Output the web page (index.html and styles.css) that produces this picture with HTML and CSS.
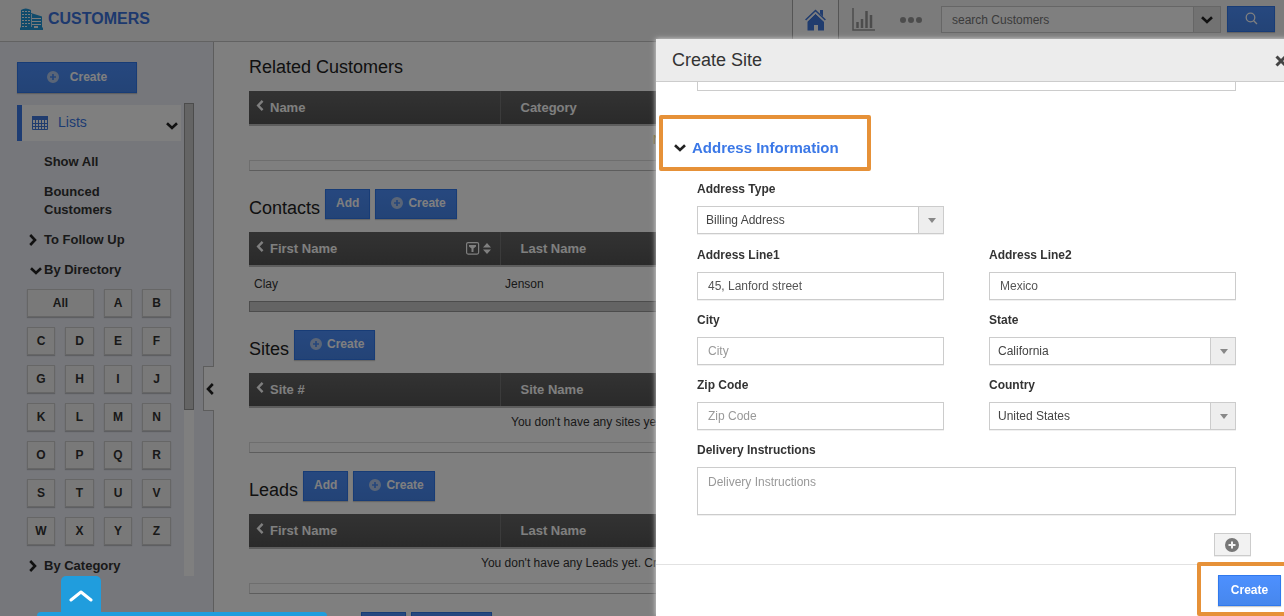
FILE: index.html
```html
<!DOCTYPE html>
<html lang="en">
<head>
<meta charset="utf-8">
<title>Customers - Create Site</title>
<link rel="stylesheet" href="styles.css">
</head>
<body>
<svg class="sprite" aria-hidden="true">
  <symbol id="plus" viewBox="0 0 14 14"><path fill="currentColor" fill-rule="evenodd" d="M7 0a7 7 0 1 1 0 14A7 7 0 0 1 7 0zM6 3.500v2.500H3.500v2H6v2.500h2V8h2.500V6H8V3.500z"/></symbol>
  <symbol id="down" viewBox="0 0 12 8"><path fill="none" stroke="currentColor" stroke-width="2.600" d="M1 1.200l5 4.800 5-4.800"/></symbol>
  <symbol id="right" viewBox="0 0 8 12"><path fill="none" stroke="currentColor" stroke-width="2.600" d="M1.200 1L6 6l-4.800 5"/></symbol>
  <symbol id="left" viewBox="0 0 8 12"><path fill="none" stroke="currentColor" stroke-width="2.600" d="M6.800 1L2 6l4.800 5"/></symbol>
</svg>

<div class="app">
  <header class="topbar">
    <svg class="logo" viewBox="0 0 23 22" aria-hidden="true">
      <path fill="#2096d8" d="M1 2Q5.500-1 11 2v3l11 3.500v11h1V22H0v-2.500h1z"/>
      <path stroke="#f6f6f6" stroke-width="1" d="M2 3.500h2m1 0h2m1 0h2M2 6.500h2m1 0h2m1 0h2M2 9.500h2m1 0h2m1 0h2M2 12.500h2m1 0h2m1 0h2M2 15.500h2m1 0h2m1 0h2M2 18.500h2m1 0h2M12 10.500h9M12 13.500h9M12 16.500h9"/>
      <path stroke="#f6f6f6" stroke-width=".800" d="M11.500 6v13"/>
      <path fill="#f6f6f6" d="M14 18h4v2h-4z"/>
    </svg>
    <h1 class="brand">CUSTOMERS</h1>
    <nav class="tools">
      <a class="tool tool-home" href="#" aria-label="Home">
        <svg width="21" height="22" viewBox="0 0 21 22"><path fill="#4178dd" d="M10.500 4.800L19 12.500V21.500h-6V16H9v5.500H2.500v-9zM15 1h3v6.500l-3-3z"/><path fill="none" stroke="#fff" stroke-width="1" d="M1.500 12.800l9-8.500 9 8.500"/><path fill="none" stroke="#4178dd" stroke-width="1.600" d="M.6 11L10.500 1.500l9.900 9.500"/></svg>
      </a>
      <a class="tool" href="#" aria-label="Reports">
        <svg width="23" height="23" viewBox="0 0 23 23"><path fill="none" stroke="#999" stroke-width="1.500" d="M1 0v22h22"/><path stroke="#999" stroke-width="2.500" d="M5.500 20v-6M10 20V11M14.500 20V3M19 20V7"/></svg>
      </a>
      <a class="tool" href="#" aria-label="More">
        <svg width="22" height="6" viewBox="0 0 22 6"><g fill="#999"><circle cx="3" cy="3" r="3"/><circle cx="11" cy="3" r="3"/><circle cx="19" cy="3" r="3"/></g></svg>
      </a>
    </nav>
    <form class="search">
      <input class="search-input" type="text" placeholder="search Customers" aria-label="Search">
      <button class="search-scope" type="button" aria-label="Choose scope"><svg width="12" height="8"><use href="#down"/></svg></button>
      <button class="btn search-go" type="button" aria-label="Search"><svg width="13" height="13" viewBox="0 0 13 13"><g fill="none" stroke="#fff" stroke-width="1.300"><circle cx="5.500" cy="5.500" r="4.300"/><path d="M8.700 8.700L12 12"/></g></svg></button>
    </form>
  </header>

  <div class="columns">
    <aside class="sidebar">
      <button class="btn btn-main" type="button"><svg class="plus" width="12" height="12"><use href="#plus"/></svg>Create</button>
      <div class="side-scroll">
        <div class="side-body">
          <button class="lists" type="button">
            <svg width="16" height="14" viewBox="0 0 16 14"><path fill="#4178dd" d="M0 0h16v4H0z"/><path fill="none" stroke="#4178dd" stroke-width="1" d="M.5 4v9.500h15V4M3.500 4v9M6.500 4v9M9.500 4v9M12.500 4v9M0 7.500h16M0 10.500h16"/></svg>
            <span class="lists-name">Lists</span>
            <svg class="lists-arrow" width="12" height="8"><use href="#down"/></svg>
          </button>
          <nav class="side-nav">
            <a href="#">Show All</a>
            <a href="#">Bounced<br>Customers</a>
            <a href="#"><svg class="mark" width="8" height="12"><use href="#right"/></svg>To Follow Up</a>
            <a href="#"><svg class="mark mark-open" width="12" height="8"><use href="#down"/></svg>By Directory</a>
          </nav>
          <div class="letters">
            <button class="wide" type="button">All</button><button type="button">A</button><button type="button">B</button>
            <button type="button">C</button><button type="button">D</button><button type="button">E</button><button type="button">F</button>
            <button type="button">G</button><button type="button">H</button><button type="button">I</button><button type="button">J</button>
            <button type="button">K</button><button type="button">L</button><button type="button">M</button><button type="button">N</button>
            <button type="button">O</button><button type="button">P</button><button type="button">Q</button><button type="button">R</button>
            <button type="button">S</button><button type="button">T</button><button type="button">U</button><button type="button">V</button>
            <button type="button">W</button><button type="button">X</button><button type="button">Y</button><button type="button">Z</button>
          </div>
          <nav class="side-nav side-nav-end">
            <a href="#"><svg class="mark" width="8" height="12"><use href="#right"/></svg>By Category</a>
          </nav>
        </div>
        <div class="track"><div class="thumb"></div></div>
      </div>
      <button class="collapse" type="button" aria-label="Collapse"><svg width="8" height="12"><use href="#left"/></svg></button>
    </aside>

    <main class="content">
      <section class="block">
        <div class="block-head"><h2>Related Customers</h2></div>
        <table>
          <thead><tr><th class="first"><svg width="8" height="11"><use href="#left"/></svg>Name</th><th>Category</th></tr></thead>
          <tbody><tr><td class="note note-related" colspan="2">No related customers</td></tr></tbody>
        </table>
        <div class="hbar"></div>
      </section>
      <section class="block">
        <div class="block-head"><h2>Contacts</h2><button class="btn" type="button">Add</button><button class="btn btn-create" type="button"><svg class="plus" width="12" height="12"><use href="#plus"/></svg>Create</button></div>
        <table>
          <thead><tr><th class="first"><svg width="8" height="11"><use href="#left"/></svg>First Name<span class="sort"><svg width="25" height="13" viewBox="0 0 25 13" aria-hidden="true"><rect x=".6" y=".6" width="12" height="11.500" rx="1.500" fill="none" stroke="#fff" stroke-width="1.200"/><path fill="#fff" d="M3 3h7v1.500L7.500 6.500V10h-2V6.500L3 4.500zM21 1l4 4.500h-8zM21 12l4-4.500h-8z"/></svg></span></th><th>Last Name</th></tr></thead>
          <tbody><tr><td>Clay</td><td>Jenson</td></tr></tbody>
        </table>
        <div class="hbar hbar-full"></div>
      </section>
      <section class="block">
        <div class="block-head"><h2>Sites</h2><button class="btn btn-create" type="button"><svg class="plus" width="12" height="12"><use href="#plus"/></svg>Create</button></div>
        <table>
          <thead><tr><th class="first"><svg width="8" height="11"><use href="#left"/></svg>Site #</th><th>Site Name</th></tr></thead>
          <tbody><tr><td class="note note-sites" colspan="2">You don't have any sites yet.</td></tr></tbody>
        </table>
        <div class="hbar"></div>
      </section>
      <section class="block">
        <div class="block-head"><h2>Leads</h2><button class="btn" type="button">Add</button><button class="btn btn-create" type="button"><svg class="plus" width="12" height="12"><use href="#plus"/></svg>Create</button></div>
        <table>
          <thead><tr><th class="first"><svg width="8" height="11"><use href="#left"/></svg>First Name</th><th>Last Name</th></tr></thead>
          <tbody><tr><td class="note note-leads" colspan="2">You don't have any Leads yet. Create one</td></tr></tbody>
        </table>
        <div class="hbar"></div>
      </section>
      <section class="block">
        <div class="block-head block-head-next"><button class="btn btn-add" type="button" aria-label="Add"></button><button class="btn btn-new" type="button" aria-label="Create"></button></div>
      </section>
    </main>
  </div>
</div>

<div class="shade"></div>

<div class="dock">
  <button class="dock-tab" type="button" aria-label="Open dock"><svg width="24" height="12" viewBox="0 0 24 12"><path fill="none" stroke="#fff" stroke-width="3" stroke-linecap="round" stroke-linejoin="round" d="M2 10l10-8 10 8"/></svg></button>
  <div class="dock-bar"></div>
</div>

<div class="dialog" role="dialog" aria-labelledby="dialog-title">
  <div class="dialog-head">
    <h2 id="dialog-title">Create Site</h2>
    <button class="close" type="button" aria-label="Close"><svg width="12" height="12" viewBox="0 0 12 12"><path stroke="#444" stroke-width="3" d="M1.500 1.500l9 9m0-9l-9 9"/></svg></button>
  </div>
  <form class="dialog-body">
    <div class="cut-field"></div>
    <h3 class="group"><svg width="12" height="8"><use href="#down"/></svg>Address Information</h3>
    <div class="fields fields-type">
      <div class="field"><label for="type">Address Type</label><div class="select"><select id="type"><option>Billing Address</option></select></div></div>
    </div>
    <div class="fields">
      <div class="field"><label for="line1">Address Line1</label><input id="line1" type="text" value="45, Lanford street"></div>
      <div class="field"><label for="line2">Address Line2</label><input id="line2" type="text" value="Mexico"></div>
      <div class="field"><label for="city">City</label><input id="city" type="text" placeholder="City"></div>
      <div class="field"><label for="state">State</label><div class="select"><select id="state"><option>California</option></select></div></div>
      <div class="field"><label for="zip">Zip Code</label><input id="zip" type="text" placeholder="Zip Code"></div>
      <div class="field"><label for="country">Country</label><div class="select"><select id="country"><option>United States</option></select></div></div>
      <div class="field field-wide"><label for="notes">Delivery Instructions</label><textarea id="notes" placeholder="Delivery Instructions"></textarea></div>
    </div>
    <button class="more" type="button" aria-label="Add address"><svg width="14" height="14"><use href="#plus"/></svg></button>
  </form>
  <div class="dialog-foot"><button class="btn" type="button">Create</button></div>
  <div class="ring ring-group"></div>
  <div class="ring ring-submit"></div>
</div>
</body>
</html>
```
FILE: styles.css
```css
* { box-sizing: border-box; }

body {
  margin: 0;
  height: 100vh;
  overflow: hidden;
  background: #fff;
  color: #333;
  font: 12px/18px "Liberation Sans", Arial, sans-serif;
}

h1, h2, h3 { margin: 0; }
a { color: inherit; text-decoration: none; }
svg { display: block; flex: none; }
button, input, select, textarea { margin: 0; font: inherit; color: inherit; border-radius: 0; }
.sprite { position: absolute; width: 0; height: 0; }

.btn {
  display: flex;
  align-items: center;
  justify-content: center;
  height: 30px;
  padding: 0 10px 2px;
  border: 1px solid #3079ed;
  background: linear-gradient(#4d90fe, #4787ed);
  box-shadow: 0 1px 1px rgba(0, 0, 0, .2);
  color: #fff;
  font-weight: bold;
}
.plus { color: #b5cbee; }

/* Page behind the dialog */
.app { display: flex; flex-direction: column; height: 100vh; overflow: hidden; }

.topbar {
  display: flex;
  flex: none;
  height: 42px;
  padding: 0 9px 0 20px;
  border-bottom: 1px solid #c4c4c4;
  background: #f6f6f6;
}
.logo { width: 23px; height: 22px; margin-top: 8px; }
.brand { margin: 10px auto 0 5px; color: #3b73dc; font-size: 16px; line-height: 18px; }
.tools { display: flex; height: 39px; }
.tool { display: flex; align-items: center; justify-content: center; width: 48px; }
.tool-home { width: 47px; border: solid #aaa; border-width: 0 1px; background: #fff; }
.search { display: flex; margin: 6px 0 0 6px; height: 27px; }
.search-input { width: 253px; padding: 0 10px; border: 1px solid #ccc; background: #fff; }
.search-input::placeholder { color: #777; opacity: 1; }
.search-scope {
  display: flex;
  align-items: center;
  justify-content: center;
  width: 27px;
  padding: 0;
  border: 1px solid #ccc;
  border-left: 0;
  background: #e4e4e4;
  color: #222;
}
.search-go { width: 48px; height: 26px; margin-left: 6px; }

.columns { display: flex; flex: 1; min-height: 0; }
.sidebar {
  position: relative;
  flex: none;
  width: 214px;
  padding: 20px 0 0 17px;
  border-right: 1px solid #bbb;
  background: #eceef6;
}
.btn-main { gap: 11px; width: 120px; height: 31px; }
.side-scroll { display: flex; gap: 3px; margin-top: 10px; height: 473px; }
.side-body { width: 164px; padding-top: 2px; }
.track { width: 10px; background: #fff; }
.thumb { height: 65%; border: 1px solid #999; background: #c8c8c8; }
.lists {
  display: flex;
  align-items: center;
  width: 100%;
  height: 36px;
  padding: 0 3px 2px 10px;
  border: 0;
  border-left: 5px solid #3b78e7;
  background: #fff;
  color: #3b78e7;
  font-size: 14px;
}
.lists svg { margin-top: 2px; }
.lists-name { margin: 0 auto 0 10px; }
.lists .lists-arrow { margin-top: 8px; color: #222; }
.side-nav {
  display: flex;
  flex-direction: column;
  gap: 12px;
  padding: 12px 0 10px 27px;
  font-size: 13px;
  font-weight: bold;
}
.side-nav a { position: relative; }
.mark { position: absolute; left: -15px; top: 3px; color: #222; }
.mark-open { left: -14px; top: 6px; }
.letters {
  display: grid;
  grid-template-columns: 28px 29px 28px 29px;
  grid-auto-rows: 28px;
  gap: 10px;
  padding-left: 10px;
}
.letters button {
  padding: 0;
  border: 1px solid #ccc;
  background: #f2f2f2;
  box-shadow: 0 1px 1px rgba(0, 0, 0, .2);
  font-weight: bold;
}
.letters .wide { grid-column: span 2; }
.collapse {
  position: absolute;
  right: -1px;
  top: 324px;
  width: 11px;
  height: 45px;
  padding: 0 0 0 2px;
  border: 1px solid #bbb;
  border-right: 0;
  background: #fff;
  color: #222;
}

.content { flex: 1; min-width: 0; padding: 6px 35px 0; }
.block { margin-bottom: 18px; }
.block-head { display: flex; align-items: flex-end; gap: 5px; height: 30px; margin-bottom: 13px; }
.block-head h2 { font-size: 18px; font-weight: normal; line-height: 22px; color: #222; }
.block-head-next { padding-left: 112px; }
.btn-create { gap: 5px; padding: 0 10px 2px 15px; }
.btn-add { width: 45px; }
.btn-new { width: 81px; }
table { width: 100%; border-collapse: collapse; table-layout: fixed; }
thead tr { height: 34px; background: linear-gradient(#666, #545454); }
thead { border-bottom: 2px solid #bbb; }
th {
  padding: 0 20px;
  color: #fff;
  font-size: 13px;
  text-align: left;
}
th.first { position: relative; width: 251px; padding-left: 21px; border-right: 1px solid #777; }
th.first svg { position: absolute; left: 7px; top: 9px; }
th.first .sort svg { left: auto; right: 9px; top: 10px; }
td { height: 35px; padding: 0 5px; white-space: nowrap; }
.note { padding-bottom: 6px; }
.note-related { padding-left: 404px; color: #b89a2a; }
.note-sites { padding-left: 262px; }
.note-leads { padding-left: 232px; }
.hbar { height: 11px; border: 1px solid #dcdcdc; border-bottom-color: #bbb; }
.hbar-full { border-color: #999; background: #c8c8c8; }

.shade { position: fixed; inset: 0; background: rgba(0, 0, 0, .5); }

.dock { position: fixed; left: 37px; bottom: 0; width: 290px; }
.dock-tab {
  display: flex;
  align-items: center;
  justify-content: center;
  width: 40px;
  height: 36px;
  margin-left: 24px;
  padding: 4px 0 0;
  border: 0;
  border-radius: 5px 5px 0 0;
  background: #209ddd;
}
.dock-bar { height: 4px; border-radius: 5px 5px 0 0; background: #209ddd; }

/* Dialog, sliding in from the right edge */
.dialog {
  position: fixed;
  left: 656px;
  right: -16px;
  top: 39px;
  bottom: 0;
  display: flex;
  flex-direction: column;
  background: #fff;
  box-shadow: 0 0 5px #ddd;
}
.dialog-head {
  display: flex;
  align-items: center;
  justify-content: space-between;
  height: 43px;
  padding: 0 13px 0 16px;
  border-bottom: 1px solid #ccc;
  background: #ececec;
}
.dialog-head h2 { font-size: 18px; font-weight: normal; line-height: 22px; }
.close { padding: 2px 0 0; border: 0; background: none; }
.dialog-body {
  display: flex;
  flex: 1;
  flex-direction: column;
  padding: 0 64px 0 41px;
}
.cut-field { height: 9px; border: 1px solid #ccc; border-top: 0; }
.group {
  display: flex;
  align-items: center;
  gap: 6px;
  margin: 47px 0 22px -23px;
  color: #3b78e7;
  font-size: 15px;
  line-height: 20px;
}
.group svg { color: #222; }
.fields { display: grid; grid-template-columns: 1fr 1fr; gap: 11px 45px; }
.fields-type { margin-bottom: 12px; }
.field { display: flex; flex-direction: column; gap: 8px; min-width: 0; }
.field-wide { grid-column: 1 / -1; }
.field label { font-weight: bold; }
.field input, .field select, .field textarea {
  width: 100%;
  height: 28px;
  padding: 0 10px;
  border: 1px solid #ccc;
  background: #fff;
  box-shadow: 0 1px 0 #f0f0f0;
  color: #555;
}
.field select { appearance: none; padding: 0 8px; color: #444; }
.field textarea { display: block; height: 48px; padding: 5px 10px; resize: none; }
.field ::placeholder { color: #999; opacity: 1; }
.select { position: relative; height: 28px; }
.select::before {
  content: "";
  position: absolute;
  right: 1px;
  top: 1px;
  bottom: 1px;
  width: 24px;
  border-left: 1px solid #ccc;
  background: #eee;
  pointer-events: none;
}
.select::after {
  content: "";
  position: absolute;
  right: 8px;
  top: 12px;
  border: solid transparent;
  border-width: 5px 4px 0;
  border-top-color: #888;
  pointer-events: none;
}
.more {
  display: flex;
  align-items: center;
  justify-content: center;
  align-self: flex-end;
  width: 37px;
  height: 23px;
  margin: 18px -15px 0 0;
  padding: 0 1px 0 0;
  border: 1px solid #ccc;
  background: #f2f2f2;
  box-shadow: 0 1px 0 #eee;
  color: #777;
}
.dialog-foot {
  display: flex;
  justify-content: flex-end;
  height: 52px;
  padding: 10px 19px 0 0;
  border-top: 1px solid #e2e2e2;
}
.dialog-foot .btn { width: 63px; height: 31px; }
.ring { position: absolute; border: 4px solid #e69138; border-radius: 2px; pointer-events: none; }
.ring-group { left: 3px; top: 76px; width: 212px; height: 56px; }
.ring-submit { right: 0; bottom: 0; width: 103px; height: 54px; }
```
